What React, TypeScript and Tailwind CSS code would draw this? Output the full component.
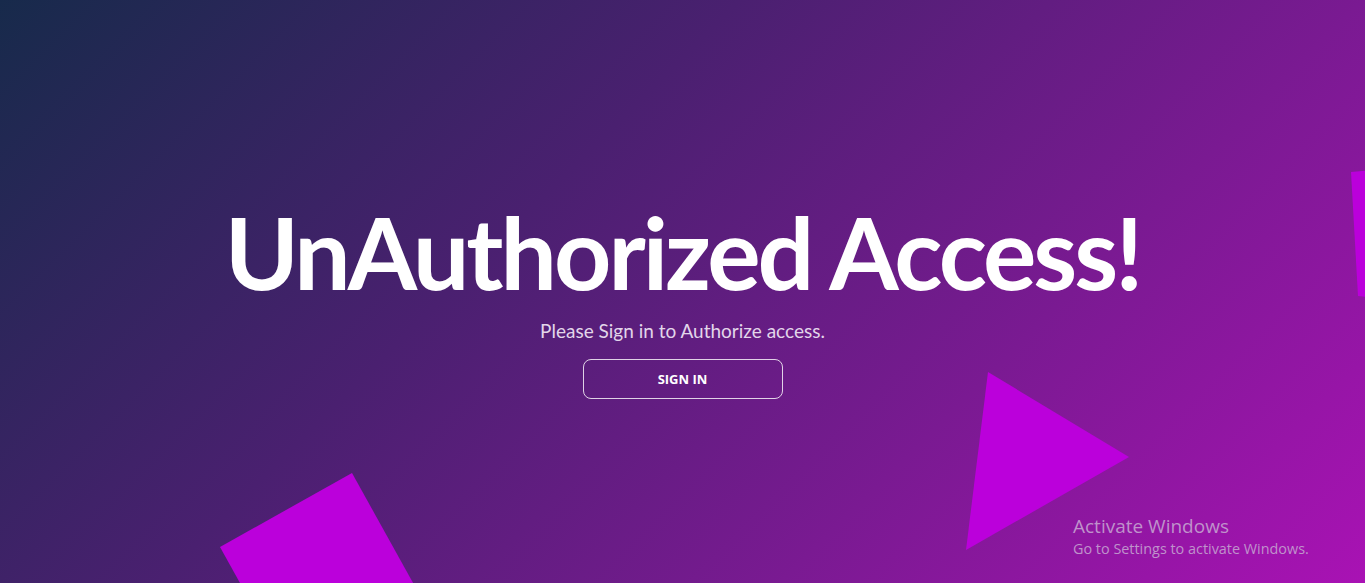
export default function App() {
  return (
    <div className="relative h-[583px] w-full overflow-hidden bg-[linear-gradient(135deg,#172a4b_0%,#4a2070_38%,#7a1a92_70%,#a912b4_100%)]">
      {/* decorative shapes */}
      <svg className="pointer-events-none absolute inset-0 h-full w-full" viewBox="0 0 1365 583" preserveAspectRatio="none">
        <polygon points="220,547 352,473 432,617 300,691" fill="#bb00db" />
        <polygon points="988,372 1129,457 966,550" fill="#bb00db" />
        <polygon points="1351,172 1400,168 1400,300 1358,296" fill="#bb00db" />
      </svg>

      <div className="relative flex h-full flex-col items-center justify-center pt-3">
        <h1 className="font-['Lato',sans-serif] text-[100px] font-bold leading-[1.1] tracking-[-3px] text-white">
          UnAuthorized Access!
        </h1>
        <p className="mt-[11px] font-['Lato',sans-serif] text-[19px] text-[#e2d6ea]">
          Please Sign in to Authorize access.
        </p>
        <button className="mt-[14px] h-10 w-[200px] rounded-lg border border-white/80 font-['Open_Sans',sans-serif] text-[13px] font-bold text-white">
          SIGN IN
        </button>
      </div>

      {/* windows watermark */}
      <div className="absolute left-[1073px] top-[514px] font-['Open_Sans',sans-serif] text-[#bf92cb]">
        <div className="text-[19px] leading-6">Activate Windows</div>
        <div className="mt-[1px] text-[14.4px] leading-5">Go to Settings to activate Windows.</div>
      </div>
    </div>
  )
}
